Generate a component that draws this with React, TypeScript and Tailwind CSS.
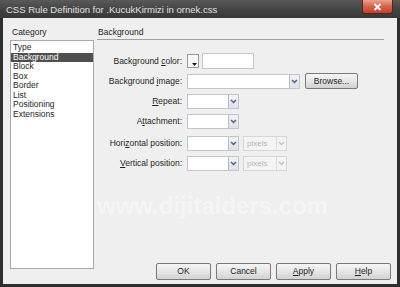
import type { ReactNode } from 'react'

const FONT = { fontFamily: '"Liberation Sans", Arial, sans-serif' }

const CATEGORIES = ['Type', 'Background', 'Block', 'Box', 'Border', 'List', 'Positioning', 'Extensions']

function Chevron({ disabled = false }: { disabled?: boolean }) {
  return (
    <div
      className={`flex h-full w-[10px] items-center justify-center border-l ${
        disabled ? 'border-[#dcdcdc] bg-[#f4f4f4]' : 'border-[#b7bcc4] bg-gradient-to-b from-[#f2f4f7] to-[#dde2e9]'
      }`}
    >
      <svg width="7" height="5" viewBox="0 0 7 5">
        <path d="M1 1 L3.5 3.5 L6 1" fill="none" stroke={disabled ? '#c4c4c4' : '#4d6185'} strokeWidth="1.4" />
      </svg>
    </div>
  )
}

function Combo({ w, text, disabled = false }: { w: string; text?: string; disabled?: boolean }) {
  return (
    <div
      className={`flex h-[15px] ${w} border ${
        disabled ? 'border-[#d6d6d6] bg-[#f4f4f4]' : 'border-[#c2c6cc] bg-white'
      }`}
    >
      <div className="flex-1 pl-[3px] text-[8px] leading-[13px] text-[#b4b4b4]">{text}</div>
      <Chevron disabled={disabled} />
    </div>
  )
}

function Row({ label, children, className = '' }: { label: ReactNode; children: ReactNode; className?: string }) {
  return (
    <div className={`flex h-[20px] items-center ${className}`}>
      <div className="w-[86px] pr-[1px] text-right text-[8.5px] text-[#1e1e1e]">{label}</div>
      <div className="ml-[4px] flex items-center">{children}</div>
    </div>
  )
}

function Btn({ children }: { children: ReactNode }) {
  return (
    <button
      type="button"
      className="h-[17px] w-[55px] rounded-[2px] border border-[#7a7a7a] bg-gradient-to-b from-[#f6f6f6] via-[#e6e6e6] to-[#d2d2d2] text-[8.5px] leading-none text-[#1e1e1e]"
    >
      {children}
    </button>
  )
}

export default function App() {
  return (
    <div className="flex h-[287px] w-[400px] flex-col overflow-hidden bg-[#2e2e2e]" style={FONT}>
      {/* title bar */}
      <div className="flex h-[18px] shrink-0 items-start justify-between bg-gradient-to-b from-[#5a5a5a] via-[#444] to-[#383838] pl-[6px] pr-[7px]">
        <span className="pt-[4px] text-[9.5px] leading-[11px] text-[#e0e0e0]">
          CSS Rule Definition for .KucukKirmizi in ornek.css
        </span>
        <div className="flex h-[14px] w-[31px] items-center justify-center rounded-b-[3px] border border-t-0 border-[#5a2418] bg-gradient-to-b from-[#e8a38f] via-[#d5634a] to-[#c0412b]">
          <svg width="9" height="8" viewBox="0 0 9 8">
            <path d="M1.5 1 L7.5 7 M7.5 1 L1.5 7" stroke="#fff" strokeWidth="1.8" />
          </svg>
        </div>
      </div>

      {/* body */}
      <div className="relative mx-[3px] mb-[3px] flex flex-1 bg-[#efefef]">
        {/* left column */}
        <div className="ml-[7px] flex w-[84px] flex-col pt-[8px] pb-[15px]">
          <div className="h-[13px] pl-[2px] text-[8.5px] leading-[13px] text-[#1e1e1e]">Category</div>
          <div className="mt-[1px] flex-1 border border-[#a9a9a9] bg-white pt-[2px]">
            {CATEGORIES.map((c) => (
              <div
                key={c}
                className={`h-[9.5px] pl-[2px] text-[8.5px] leading-[9.5px] ${
                  c === 'Background' ? 'bg-[#4f4f4f] text-white' : 'text-[#1e1e1e]'
                }`}
              >
                {c}
              </div>
            ))}
          </div>
        </div>

        {/* right column */}
        <div className="ml-[3px] mr-[6px] flex flex-1 flex-col pt-[8px] pb-[4px]">
          <div className="mr-[7px] h-[14px] border-b border-[#a0a0a0] pl-[1px] text-[8.5px] leading-[13px] text-[#1e1e1e]">
            Background
          </div>

          <div className="mt-[11px] flex flex-col">
            <Row
              label={
                <>
                  Background <u>c</u>olor:
                </>
              }
            >
              <div className="relative h-[14px] w-[12px] border border-[#9a9a9a] bg-[#f7f7f7]">
                <svg className="absolute right-[1px] bottom-[1px]" width="5" height="3" viewBox="0 0 5 3">
                  <path d="M0 0 L5 0 L2.5 3 Z" fill="#222" />
                </svg>
              </div>
              <div className="ml-[3px] h-[16px] w-[52px] border border-[#c2c6cc] bg-white" />
            </Row>
            <Row
              label={
                <>
                  Background <u>i</u>mage:
                </>
              }
            >
              <Combo w="w-[113px]" />
              <button
                type="button"
                className="ml-[5px] h-[16px] w-[53px] rounded-[2px] border border-[#7a7a7a] bg-gradient-to-b from-[#f6f6f6] via-[#e6e6e6] to-[#d2d2d2] text-[8.5px] leading-none text-[#1e1e1e]"
              >
                Browse...
              </button>
            </Row>
            <Row
              label={
                <>
                  <u>R</u>epeat:
                </>
              }
            >
              <Combo w="w-[52px]" />
            </Row>
            <Row
              label={
                <>
                  A<u>t</u>tachment:
                </>
              }
            >
              <Combo w="w-[52px]" />
            </Row>
            <Row
              className="mt-[2px]"
              label={
                <>
                  Hori<u>z</u>ontal position:
                </>
              }
            >
              <Combo w="w-[52px]" />
              <div className="ml-[4px]">
                <Combo w="w-[44px]" text="pixels" disabled />
              </div>
            </Row>
            <Row
              label={
                <>
                  <u>V</u>ertical position:
                </>
              }
            >
              <Combo w="w-[52px]" />
              <div className="ml-[4px]">
                <Combo w="w-[44px]" text="pixels" disabled />
              </div>
            </Row>
          </div>

          <div className="mt-auto flex justify-end gap-[5px]">
            <Btn>OK</Btn>
            <Btn>Cancel</Btn>
            <Btn>
              <u>A</u>pply
            </Btn>
            <Btn>
              <u>H</u>elp
            </Btn>
          </div>
        </div>

        {/* watermark */}
        <div className="pointer-events-none absolute top-[176px] left-[94px] text-[24px] leading-[24px] font-bold text-white/40">
          www.dijitalders.com
        </div>
      </div>
    </div>
  )
}
